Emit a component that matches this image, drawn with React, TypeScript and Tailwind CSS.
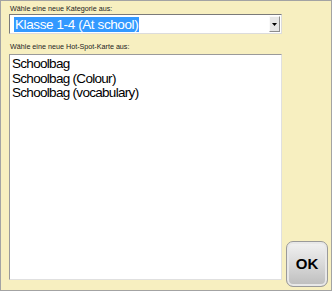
const items = ['Schoolbag', 'Schoolbag (Colour)', 'Schoolbag (vocabulary)'];

const App: React.FC = () => {
  return (
    <div className="w-[332px] h-[291px] border border-[#a3a3a3] bg-[#f7efc0] flex font-['Liberation_Sans',Arial,sans-serif] text-black">
      <div className="w-[273px] ml-[8px] flex flex-col pt-[3px] pb-[10px]">
        <p className="text-[7.2px] leading-[9px] ml-[1px] text-[#222]">Wähle eine neue Kategorie aus:</p>
        <div className="mt-[1px] h-[20px] flex bg-white border border-[#7a7a7a] border-r-[#dcdcdc] border-b-[#dcdcdc]">
          <div className="flex-1 flex items-center pl-[4px]">
            <span className="bg-[#3399ff] text-white text-[13.5px] leading-[15px] tracking-[-0.4px] px-[1px]">Klasse 1-4 (At school)</span>
          </div>
          <div className="w-[11px] my-[1px] mr-[1px] bg-[#e6e6e6] border border-[#fafafa] border-r-[#8c8c8c] border-b-[#8c8c8c] flex items-center justify-center">
            <svg width="5" height="3" viewBox="0 0 5 3"><path d="M0 0h5L2.5 3z" fill="#000" /></svg>
          </div>
        </div>
        <p className="mt-[8px] text-[7.2px] leading-[9px] ml-[1px] text-[#222]">Wähle eine neue Hot-Spot-Karte aus:</p>
        <div className="mt-[3px] flex-1 bg-white border border-[#9a9a9a] border-r-[#e0e0e0] border-b-[#e0e0e0] pt-[2px] pl-[2px]">
          {items.map((it) => (
            <div key={it} className="text-[13.5px] leading-[14.5px] tracking-[-0.7px]">{it}</div>
          ))}
        </div>
      </div>
      <div className="flex-1 flex items-end justify-center pb-[3px] pl-[1px]">
        <button className="w-[42px] h-[46px] rounded-[7px] border border-[#9a9a9a] bg-gradient-to-b from-[#f2f2f2] via-[#d9d9d9] to-[#bdbdbd] shadow-[inset_0_0_0_2px_#e8e8e8] text-[15px] font-bold text-black">OK</button>
      </div>
    </div>
  );
};

export default App;
